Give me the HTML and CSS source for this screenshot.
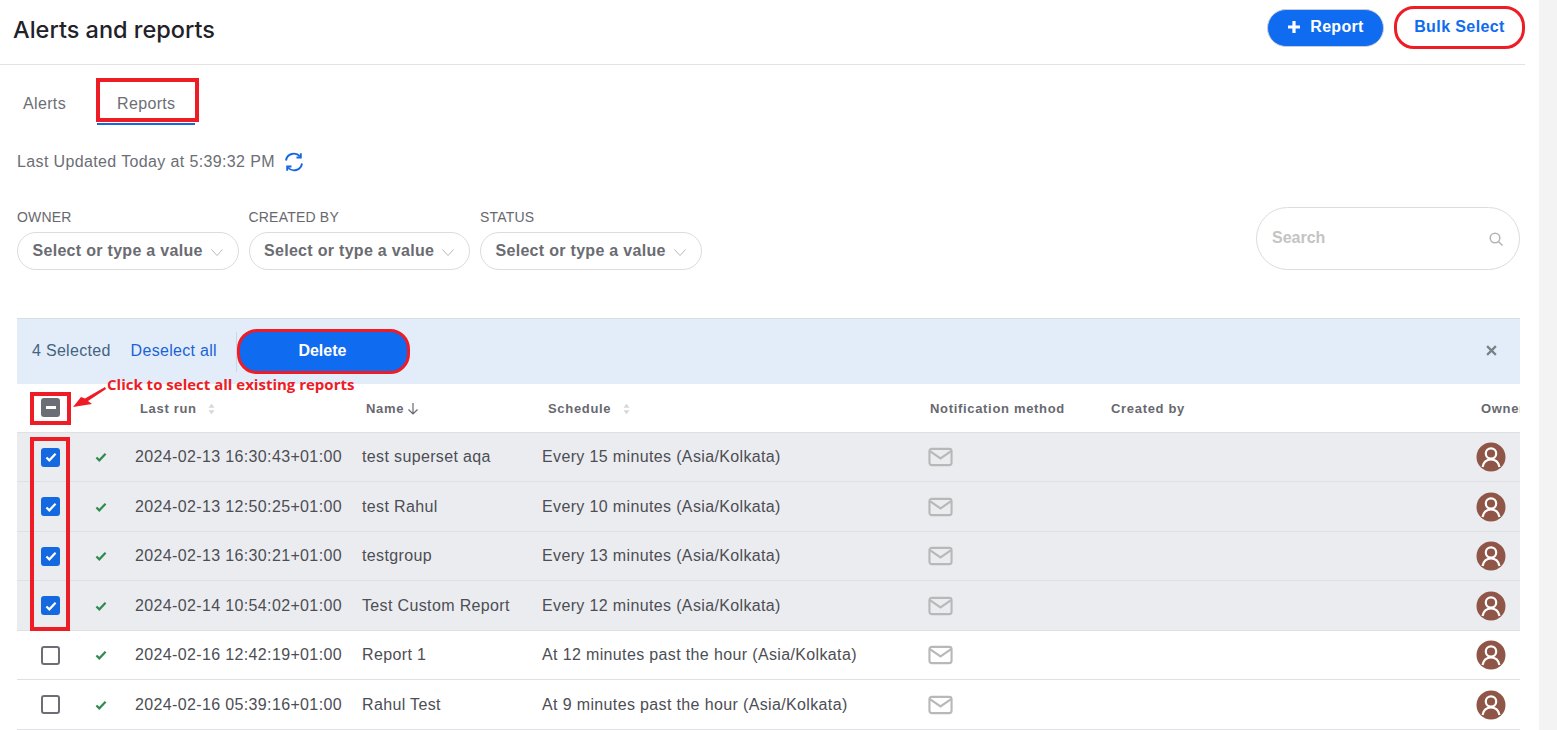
FILE: index.html
```html
<!DOCTYPE html>
<html lang="en">
<head>
  <meta charset="UTF-8">
  <meta name="viewport" content="width=device-width, initial-scale=1.0">
  <title>Alerts and reports</title>
  <link rel="stylesheet" href="styles.css">
</head>
<body>
  <svg class="sprites" width="0" height="0">
    <symbol id="i-check" viewBox="0 0 14 12"><path d="M1.5 6.5 5 10 12.5 2" fill="none" stroke="currentColor" stroke-width="2.6"/></symbol>
    <symbol id="i-mail" viewBox="0 0 26 20"><rect x="1.5" y="1.5" width="23" height="17" rx="2.5" fill="none" stroke="currentColor" stroke-width="2.2"/><path d="M2 4 13 11.5 24 4" fill="none" stroke="currentColor" stroke-width="2.2"/></symbol>
    <symbol id="i-user" viewBox="0 0 30 30"><circle cx="15" cy="15" r="14.5" fill="#8f5546"/><circle cx="15" cy="11.5" r="5.2" fill="none" stroke="#fff" stroke-width="2.2"/><path d="M6.5 25c1-5 4.500-7.500 8.500-7.500s7.500 2.500 8.500 7.500" fill="none" stroke="#fff" stroke-width="2.2"/></symbol>
    <symbol id="i-sort" viewBox="0 0 8 12"><path d="M4 0 7.500 4.500H.5zM4 12 .5 7.500h7z" fill="currentColor"/></symbol>
    <symbol id="i-chev" viewBox="0 0 12 7"><path d="M.5.5 6 6.500 11.500.5" fill="none" stroke="currentColor" stroke-width="1"/></symbol>
  </svg>

  <div class="scroll-track"></div>

  <div class="page">
    <header class="top-bar">
      <h1>Alerts and reports</h1>
      <div class="top-actions">
        <button class="btn-report">
          <svg class="plus" viewBox="0 0 14 14"><path d="M7 1v12M1 7h12" stroke="currentColor" stroke-width="3.200" fill="none"/></svg>
          Report
        </button>
        <button class="btn-bulk">Bulk Select</button>
      </div>
    </header>

    <nav class="tabs">
      <a class="tab">Alerts</a>
      <a class="tab tab-active">Reports</a>
    </nav>

    <div class="updated">
      <span>Last Updated Today at 5:39:32 PM</span>
      <svg class="refresh" viewBox="0 0 20 20" fill="none" stroke="#1468e0" stroke-width="1.900">
        <path d="M2 8.500A8 8 0 0 1 16 4.500"/>
        <path d="M16.800 1.200v4.300h-4.300"/>
        <path d="M18 11.500A8 8 0 0 1 4 15.500"/>
        <path d="M3.200 18.800v-4.300h4.300"/>
      </svg>
    </div>

    <div class="filters">
      <div class="filter">
        <label>OWNER</label>
        <div class="select"><span>Select or type a value</span><svg class="chev"><use href="#i-chev"/></svg></div>
      </div>
      <div class="filter">
        <label>CREATED BY</label>
        <div class="select"><span>Select or type a value</span><svg class="chev"><use href="#i-chev"/></svg></div>
      </div>
      <div class="filter">
        <label>STATUS</label>
        <div class="select"><span>Select or type a value</span><svg class="chev"><use href="#i-chev"/></svg></div>
      </div>
      <div class="search">
        <span>Search</span>
        <svg class="search-icon" viewBox="0 0 14 14" fill="none" stroke="#b4b4b4" stroke-width="1.500"><circle cx="6" cy="6" r="4.800"/><path d="M9.500 9.500 13.500 13.500"/></svg>
      </div>
    </div>

    <div class="bulk-bar">
      <span class="selected-count">4 Selected</span>
      <a class="deselect">Deselect all</a>
      <button class="btn-delete">Delete</button>
      <svg class="bar-close" viewBox="0 0 10 10"><path d="M1 1 9 9M9 1 1 9" stroke="currentColor" stroke-width="2" fill="none"/></svg>
    </div>

    <div class="table">
      <div class="row head">
        <div class="cell"><span class="box box-minus"><i></i></span></div>
        <div class="cell"></div>
        <div class="cell h-run">Last run <svg class="sort"><use href="#i-sort"/></svg></div>
        <div class="cell h-name">Name<svg class="down" viewBox="0 0 12 12" fill="none" stroke="#67696f" stroke-width="1.200"><path d="M6 0v11M1.500 6.500 6 11l4.500-4.500"/></svg></div>
        <div class="cell h-schedule">Schedule <svg class="sort"><use href="#i-sort"/></svg></div>
        <div class="cell h-notif">Notification method</div>
        <div class="cell h-created">Created by</div>
        <div class="cell h-owner">Owner</div>
      </div>

      <div class="row picked">
        <div class="cell"><span class="box box-on"><svg><use href="#i-check"/></svg></span></div>
        <div class="cell"><svg class="ok"><use href="#i-check"/></svg></div>
        <div class="cell">2024-02-13 16:30:43+01:00</div>
        <div class="cell">test superset aqa</div>
        <div class="cell">Every 15 minutes (Asia/Kolkata)</div>
        <div class="cell"><svg class="mail"><use href="#i-mail"/></svg></div>
        <div class="cell"></div>
        <div class="cell"><svg class="avatar"><use href="#i-user"/></svg></div>
      </div>
      <div class="row picked">
        <div class="cell"><span class="box box-on"><svg><use href="#i-check"/></svg></span></div>
        <div class="cell"><svg class="ok"><use href="#i-check"/></svg></div>
        <div class="cell">2024-02-13 12:50:25+01:00</div>
        <div class="cell">test Rahul</div>
        <div class="cell">Every 10 minutes (Asia/Kolkata)</div>
        <div class="cell"><svg class="mail"><use href="#i-mail"/></svg></div>
        <div class="cell"></div>
        <div class="cell"><svg class="avatar"><use href="#i-user"/></svg></div>
      </div>
      <div class="row picked">
        <div class="cell"><span class="box box-on"><svg><use href="#i-check"/></svg></span></div>
        <div class="cell"><svg class="ok"><use href="#i-check"/></svg></div>
        <div class="cell">2024-02-13 16:30:21+01:00</div>
        <div class="cell">testgroup</div>
        <div class="cell">Every 13 minutes (Asia/Kolkata)</div>
        <div class="cell"><svg class="mail"><use href="#i-mail"/></svg></div>
        <div class="cell"></div>
        <div class="cell"><svg class="avatar"><use href="#i-user"/></svg></div>
      </div>
      <div class="row picked">
        <div class="cell"><span class="box box-on"><svg><use href="#i-check"/></svg></span></div>
        <div class="cell"><svg class="ok"><use href="#i-check"/></svg></div>
        <div class="cell">2024-02-14 10:54:02+01:00</div>
        <div class="cell">Test Custom Report</div>
        <div class="cell">Every 12 minutes (Asia/Kolkata)</div>
        <div class="cell"><svg class="mail"><use href="#i-mail"/></svg></div>
        <div class="cell"></div>
        <div class="cell"><svg class="avatar"><use href="#i-user"/></svg></div>
      </div>
      <div class="row">
        <div class="cell"><span class="box"></span></div>
        <div class="cell"><svg class="ok"><use href="#i-check"/></svg></div>
        <div class="cell">2024-02-16 12:42:19+01:00</div>
        <div class="cell">Report 1</div>
        <div class="cell">At 12 minutes past the hour (Asia/Kolkata)</div>
        <div class="cell"><svg class="mail"><use href="#i-mail"/></svg></div>
        <div class="cell"></div>
        <div class="cell"><svg class="avatar"><use href="#i-user"/></svg></div>
      </div>
      <div class="row">
        <div class="cell"><span class="box"></span></div>
        <div class="cell"><svg class="ok"><use href="#i-check"/></svg></div>
        <div class="cell">2024-02-16 05:39:16+01:00</div>
        <div class="cell">Rahul Test</div>
        <div class="cell">At 9 minutes past the hour (Asia/Kolkata)</div>
        <div class="cell"><svg class="mail"><use href="#i-mail"/></svg></div>
        <div class="cell"></div>
        <div class="cell"><svg class="avatar"><use href="#i-user"/></svg></div>
      </div>
    </div>
  </div>

  <!-- red callouts drawn over the screenshot -->
  <div class="mark mark-tab"></div>
  <div class="mark mark-all"></div>
  <div class="mark mark-column"></div>
  <div class="note">Click to select all existing reports</div>
  <svg class="note-arrow" viewBox="0 0 36 24"><path d="M2 22 10 12 14 13.500 34 2 35 4 17 16 21 19z" fill="#ee1c25"/></svg>
</body>
</html>
```

FILE: styles.css
```css
* {
  box-sizing: border-box;
}

body {
  margin: 0;
  height: 730px;
  overflow: hidden;
  background: #fff;
  font-family: "Liberation Sans", Arial, sans-serif;
  color: #484a50;
}

.sprites {
  position: absolute;
}

.scroll-track {
  position: absolute;
  top: 0;
  right: 0;
  width: 18px;
  height: 730px;
  background: #f3f3f3;
}

.page {
  width: 1525px;
}

button {
  font-family: inherit;
  cursor: pointer;
}

/* top bar */
.top-bar {
  height: 65px;
  border-bottom: 1px solid #e3e3e3;
  display: flex;
  align-items: center;
  justify-content: space-between;
  padding: 0 0 9px 13px;
}

.top-bar h1 {
  margin: 4px 0 0;
  font-family: Inter, sans-serif;
  font-size: 23.5px;
  font-weight: 500;
  color: #1f2229;
}

.top-actions {
  display: flex;
  align-items: center;
  gap: 10px;
}

.btn-report {
  width: 117px;
  height: 38px;
  border: 1px solid #c9cdd4;
  border-radius: 19px;
  background: #0f6bf0;
  color: #fff;
  font-size: 16px;
  font-weight: 700;
  letter-spacing: 0.3px;
  display: flex;
  align-items: center;
  justify-content: center;
  gap: 9px;
  padding: 0 0 1px;
}

.plus {
  width: 14px;
  height: 14px;
}

.btn-bulk {
  width: 131px;
  height: 43px;
  border: 3px solid #ee1c25;
  border-radius: 20px;
  background: #fff;
  color: #0f6bf0;
  font-size: 16px;
  font-weight: 700;
  letter-spacing: 0.4px;
  padding: 0 0 1px;
}

/* tabs */
.tabs {
  display: flex;
  height: 60px;
}

.tab {
  height: 60px;
  padding-top: 30px;
  font-size: 16px;
  letter-spacing: 0.35px;
  color: #6c6e75;
}

.tabs .tab:first-child {
  width: 97px;
  padding-left: 23px;
}

.tab-active {
  width: 98px;
  padding-left: 20px;
  border-bottom: 2px solid #1468e0;
}

/* last updated */
.updated {
  height: 57px;
  padding: 28px 0 0 17px;
  display: flex;
  align-items: flex-start;
  gap: 9px;
  font-size: 16px;
  letter-spacing: 0.37px;
  color: #6c6e75;
}

.refresh {
  width: 20px;
  height: 20px;
  margin-top: -1px;
}

/* filters */
.filters {
  display: flex;
  gap: 10px;
  padding: 25px 5px 0 17px;
  height: 136px;
  align-items: flex-start;
}

.filter label {
  display: block;
  font-size: 14px;
  letter-spacing: 0.2px;
  color: #67696f;
  height: 25px;
  padding-top: 2px;
}

.select {
  width: 221.5px;
  height: 38px;
  border: 1px solid #dcdcdc;
  border-radius: 19px;
  display: flex;
  align-items: center;
  justify-content: space-between;
  padding: 0 15px 0 14.5px;
  font-size: 16px;
  font-weight: 700;
  letter-spacing: 0.3px;
  color: #6a6c72;
}

.chev {
  width: 12px;
  height: 7px;
  color: #b9b9b9;
  margin-top: 3px;
}

.search {
  margin-left: auto;
  width: 264px;
  height: 63px;
  border: 1px solid #dcdcdc;
  border-radius: 32px;
  display: flex;
  align-items: center;
  justify-content: space-between;
  padding: 0 16px 2px 15px;
  font-size: 16px;
  font-weight: 700;
  color: #c4c4c4;
}

.search-icon {
  width: 14px;
  height: 14px;
  margin-top: 3px;
}

/* selection bar */
.bulk-bar {
  margin: 0 5px 0 17px;
  height: 66px;
  background: #e3edfa;
  border-top: 1px solid #d8dce2;
  display: flex;
  align-items: center;
  font-size: 16px;
  letter-spacing: 0.3px;
}

.selected-count {
  margin-left: 15px;
  margin-top: -2px;
  color: #436380;
}

.deselect {
  margin-left: 20px;
  padding-right: 19px;
  padding-bottom: 2px;
  line-height: 38px;
  border-right: 1px solid #ccd5e0;
  color: #1a62d6;
}

.btn-delete {
  width: 173px;
  height: 45px;
  border: 3px solid #ee1c25;
  border-radius: 20px;
  background: #0f6bf0;
  color: #fff;
  font-size: 16px;
  font-weight: 700;
  padding: 0 2px 2px 0;
}

.bar-close {
  margin-left: auto;
  margin-right: 23px;
  margin-top: -2px;
  width: 11px;
  height: 11px;
  color: #7a8087;
}

/* table */
.table {
  margin: 0 5px 0 17px;
  overflow: hidden;
}

.row {
  display: grid;
  grid-template-columns: 67px 34px 227px 180px 386px 182px 366px 61px;
  height: 49.5px;
  border-bottom: 1px solid #dfe0e3;
  align-items: center;
  font-size: 16px;
  letter-spacing: 0.36px;
  color: #4c4e54;
}

.row .cell:nth-child(n+3) {
  padding-left: 17px;
  white-space: nowrap;
}

.row .cell:nth-child(-n+2) {
  display: flex;
  justify-content: center;
}

.picked {
  background: #ebecf0;
}

.row.head {
  height: 48.85px;
  font-size: 13px;
  font-weight: 700;
  letter-spacing: 0.68px;
  color: #67696f;
}

.row.head .cell:nth-child(n+3) {
  padding-top: 1px;
}

.row .cell.h-run { padding-left: 22px; }
.row .cell.h-name { padding-left: 21px; }
.row .cell.h-schedule { padding-left: 23px; }
.row .cell.h-notif { padding-left: 19px; }
.row .cell.h-created { padding-left: 18px; }
.row .cell.h-owner { padding-left: 22px; }

.sort {
  width: 7px;
  height: 12px;
  color: #d6d7da;
  margin-left: 7px;
  vertical-align: -2px;
}

.down {
  width: 12px;
  height: 12px;
  margin-left: 3px;
  vertical-align: -2px;
}

.box {
  width: 19px;
  height: 19px;
  border: 2px solid #6c6e75;
  border-radius: 3px;
  display: flex;
  align-items: center;
  justify-content: center;
  background: #fff;
}

.box-on {
  border-color: #1468e0;
  background: #1468e0;
  color: #fff;
}

.box-on svg {
  width: 12px;
  height: 10px;
}

.box-minus {
  background: #6c6e75;
}

.box-minus i {
  display: block;
  width: 10px;
  height: 3px;
  background: #fff;
}

.ok {
  width: 12px;
  height: 10px;
  color: #2f8a4f;
}

.mail {
  width: 25px;
  height: 20px;
  color: #b8b8b8;
  display: block;
}

.avatar {
  width: 30px;
  height: 30px;
  display: block;
  margin-left: -0.5px;
}

/* callouts */
.mark {
  position: absolute;
  border: 4px solid #ee1c25;
}

.mark-tab {
  left: 96px;
  top: 78px;
  width: 103px;
  height: 44px;
}

.mark-all {
  left: 30px;
  top: 392px;
  width: 41px;
  height: 33px;
}

.mark-column {
  left: 30px;
  top: 437px;
  width: 40px;
  height: 194px;
}

.note {
  position: absolute;
  left: 107px;
  top: 374px;
  font-family: "Open Sans", sans-serif;
  font-size: 15px;
  font-weight: 700;
  color: #ee1c25;
  white-space: nowrap;
}

.note-arrow {
  position: absolute;
  left: 71px;
  top: 385px;
  width: 36px;
  height: 24px;
}
```
